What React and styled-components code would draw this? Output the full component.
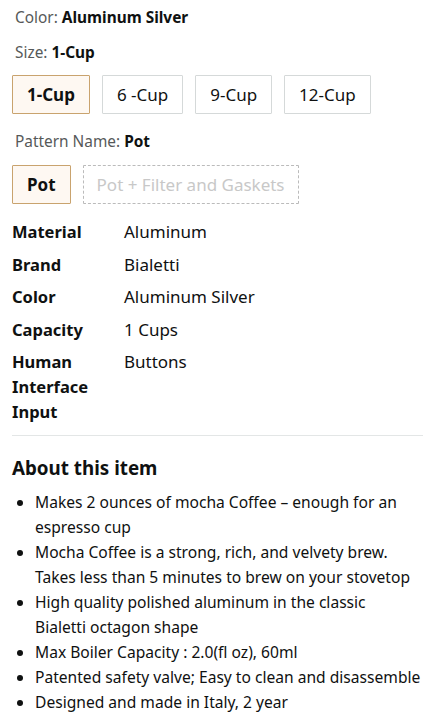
import React from "react";
import styled, { createGlobalStyle } from "styled-components";

const Global = createGlobalStyle`
  body { margin: 0; background: #fff; }
  * { box-sizing: border-box; }
`;

const Page = styled.div`
  font-family: "Noto Sans", "Open Sans", sans-serif;
  color: #0f1111;
  padding: 8px 18px 0 12px;
  width: 441px;
`;

const VariationLabel = styled.div`
  font-size: 15.4px;
  line-height: 20px;
  color: #565959;
  padding-left: 3px;
  margin-bottom: ${p => p.mb || 0}px;
  b { color: #0f1111; font-weight: 700; }
`;

const OptionRow = styled.div`
  display: flex;
  gap: 12px;
  margin-bottom: ${p => p.mb || 0}px;
`;

const Option = styled.div`
  height: 39px;
  padding: 0 ${p => p.px || 14}px;
  display: flex;
  align-items: center;
  justify-content: center;
  font-size: 17px;
  border: 1px ${p => (p.unavailable ? "dashed" : "solid")} ${p => (p.selected ? "#c9a36e" : p.unavailable ? "#bbbbbb" : "#d5d9d9")};
  background: ${p => (p.selected ? "#fef8f2" : "#fff")};
  font-weight: ${p => (p.selected ? 700 : 400)};
  color: ${p => (p.unavailable ? "#c8c8c8" : "#0f1111")};
  border-radius: 1px;
  white-space: nowrap;
`;

const Specs = styled.div`
  display: grid;
  grid-template-columns: 112px 1fr;
  font-size: 17px;
  line-height: 25px;
  margin-top: 15px;
`;

const SpecLabel = styled.div`
  font-weight: 700;
  font-size: 16.5px;
  padding-bottom: 7.5px;
`;

const SpecValue = styled.div`
  padding-bottom: 7.5px;
`;

const Divider = styled.hr`
  border: none;
  border-top: 1px solid #e3e6e6;
  margin: 3px 0 0 0;
`;

const Heading = styled.h2`
  font-size: 18.8px;
  font-weight: 700;
  line-height: 28px;
  margin: 18px 0 8px 0;
`;

const Bullets = styled.ul`
  margin: 0;
  padding-left: 23px;
  font-size: 15.6px;
  line-height: 25px;
`;

const Bullet = styled.li`
  padding-left: 0;
`;

const specs = [
  ["Material", "Aluminum"],
  ["Brand", "Bialetti"],
  ["Color", "Aluminum Silver"],
  ["Capacity", "1 Cups"],
  ["Human Interface Input", "Buttons"],
];

const bullets = [
  ["Makes 2 ounces of mocha Coffee – enough for an espresso cup"],
  ["Mocha Coffee is a strong, rich, and velvety brew. Takes less than 5 minutes to brew on your stovetop"],
  ["High quality polished aluminum in the classic", "Bialetti octagon shape"],
  ["Max Boiler Capacity : 2.0(fl oz), 60ml"],
  ["Patented safety valve; Easy to clean and disassemble"],
  ["Designed and made in Italy, 2 year"],
];

export default function App() {
  return (
    <Page>
      <Global />
      <VariationLabel mb={15}>Color: <b>Aluminum Silver</b></VariationLabel>
      <VariationLabel mb={12}>Size: <b>1-Cup</b></VariationLabel>
      <OptionRow mb={18}>
        <Option selected>1-Cup</Option>
        <Option>6 -Cup</Option>
        <Option>9-Cup</Option>
        <Option>12-Cup</Option>
      </OptionRow>
      <VariationLabel mb={13}>Pattern Name: <b>Pot</b></VariationLabel>
      <OptionRow>
        <Option selected>Pot</Option>
        <Option unavailable px={13}>Pot + Filter and Gaskets</Option>
      </OptionRow>
      <Specs>
        {specs.map(([k, v]) => (
          <React.Fragment key={k}>
            <SpecLabel>{k}</SpecLabel>
            <SpecValue>{v}</SpecValue>
          </React.Fragment>
        ))}
      </Specs>
      <Divider />
      <Heading>About this item</Heading>
      <Bullets>
        {bullets.map(parts => (
          <Bullet key={parts[0]}>
            {parts.map((t, i) => (
              <React.Fragment key={i}>
                {i > 0 && <br />}
                {t}
              </React.Fragment>
            ))}
          </Bullet>
        ))}
      </Bullets>
    </Page>
  );
}
